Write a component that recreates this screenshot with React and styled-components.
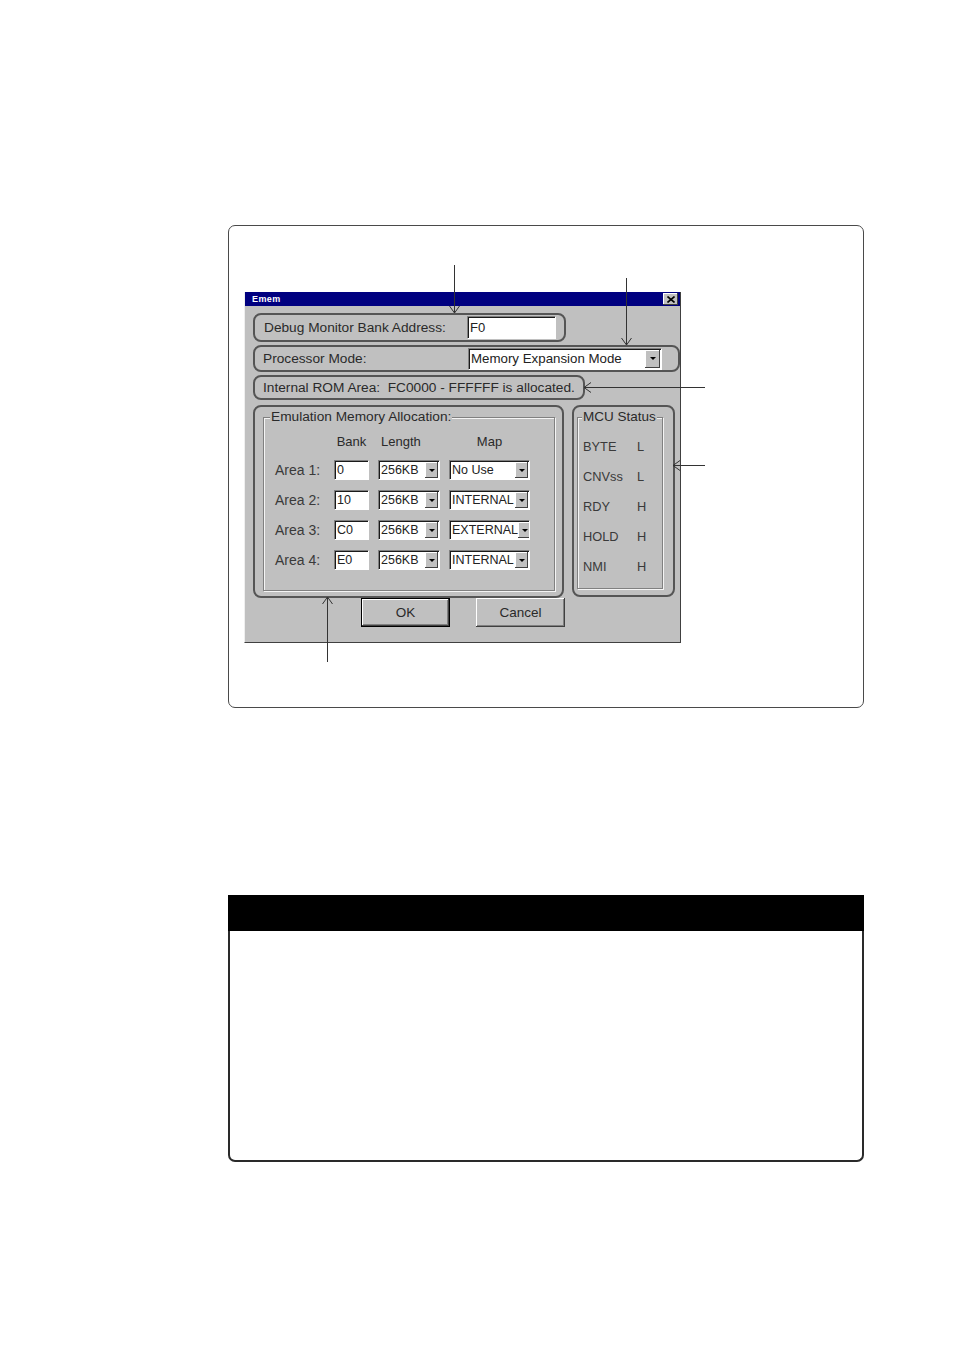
import React from "react";
import styled, { createGlobalStyle } from "styled-components";

const Global = createGlobalStyle`
  html, body { margin: 0; padding: 0; background: #fff; }
  body { font-family: "Liberation Sans", Arial, sans-serif; color: #222; }
`;

const Page = styled.div`
  padding: 225px 0 160px 228px;
  display: flex;
  flex-direction: column;
`;

const Figure = styled.div`
  position: relative;
  box-sizing: border-box;
  width: 636px;
  height: 483px;
  border: 1px solid #4a4a4a;
  border-radius: 7px;
  padding: 66px 0 0 15px;
`;

const Annotations = styled.svg`
  position: absolute;
  left: 0;
  top: 0;
  width: 100%;
  height: 100%;
  overflow: visible;
  pointer-events: none;
`;

const Dialog = styled.div`
  box-sizing: border-box;
  width: 437px;
  height: 351px;
  background: #c0c0c0;
  border-left: 1px solid #efefef;
  border-right: 1px solid #404040;
  border-bottom: 1px solid #404040;
  display: flex;
  flex-direction: column;
`;

const TitleBar = styled.div`
  height: 14px;
  background: #000080;
  display: flex;
  align-items: center;
  justify-content: space-between;
  padding: 0 2px 0 7px;
`;

const Title = styled.span`
  color: #fff;
  font-weight: bold;
  font-size: 9px;
  letter-spacing: 0.4px;
`;

const CloseBtn = styled.div`
  box-sizing: border-box;
  width: 15px;
  height: 12px;
  background: #c0c0c0;
  box-shadow: inset -1px -1px 0 #404040, inset 1px 1px 0 #fff;
  display: flex;
  align-items: center;
  justify-content: center;
`;

const Body = styled.div`
  padding: 7px 0 0 8px;
  display: flex;
  flex-direction: column;
`;

const Callout = styled.div`
  box-sizing: border-box;
  width: ${(p) => p.$w}px;
  height: ${(p) => p.$h}px;
  margin-top: ${(p) => p.$mt || 0}px;
  border: 2px solid #555;
  border-radius: 8px;
  display: flex;
  align-items: ${(p) => (p.$top ? "flex-start" : "center")};
  justify-content: space-between;
  padding: 0 ${(p) => p.$pr || 0}px 0 ${(p) => p.$pl || 0}px;
`;

const Label = styled.span`
  font-size: 13.7px;
  color: #2a2a2a;
  white-space: pre;
`;

const Sunken = styled.div`
  box-sizing: border-box;
  width: ${(p) => p.$w}px;
  height: ${(p) => p.$h}px;
  background: #fff;
  border-top: 1px solid #808080;
  border-left: 1px solid #808080;
  border-right: 1px solid #fff;
  border-bottom: 1px solid #fff;
  box-shadow: inset 1px 1px 0 #1a1a1a;
  display: flex;
  align-items: center;
  justify-content: space-between;
  padding: 0 1px 0 2px;
  font-size: ${(p) => p.$fs || 12.5}px;
  color: #222;
  white-space: nowrap;
  overflow: hidden;
`;

const ArrowBtn = styled.div`
  flex: none;
  box-sizing: border-box;
  width: ${(p) => p.$w || 13}px;
  height: ${(p) => p.$h || 16}px;
  background: #c0c0c0;
  box-shadow: inset -1px -1px 0 #404040, inset 1px 1px 0 #fff;
  display: flex;
  align-items: center;
  justify-content: center;
  &::after {
    content: "";
    border-left: 3px solid transparent;
    border-right: 3px solid transparent;
    border-top: 3px solid #000;
  }
`;

const MainRow = styled.div`
  margin-top: 5px;
  display: flex;
  gap: 8px;
  align-items: flex-start;
`;

const GroupBox = styled.div`
  position: relative;
  box-sizing: border-box;
  width: ${(p) => p.$w}px;
  height: ${(p) => p.$h}px;
  margin: 10px 0 0 ${(p) => p.$ml}px;
  border: 1px solid #808080;
  box-shadow: inset 1px 1px 0 #f4f4f4, 1px 1px 0 #f4f4f4;
  padding: ${(p) => p.$pad};
`;

const GroupLabel = styled.span`
  position: absolute;
  top: -9px;
  left: ${(p) => p.$left}px;
  background: #c0c0c0;
  padding: 0 1px;
  font-size: ${(p) => p.$fs || 13.7}px;
  line-height: 16px;
  color: #2a2a2a;
  white-space: nowrap;
`;

const AreaGrid = styled.div`
  display: grid;
  grid-template-columns: 50px 35px 62px 81px;
  grid-template-rows: 17px repeat(4, 20px);
  column-gap: 9px;
  row-gap: 10px;
  align-items: center;
`;

const Head = styled.span`
  font-size: 13px;
  color: #2a2a2a;
  text-align: ${(p) => p.$align || "center"};
  padding-left: ${(p) => p.$pl || 0}px;
`;

const RowLabel = styled.span`
  font-size: 14px;
  color: #3a3a3a;
  white-space: nowrap;
`;

const StatusGrid = styled.div`
  display: grid;
  grid-template-columns: 54px auto;
  grid-auto-rows: 30px;
  align-items: center;
  font-size: 12.8px;
  color: #3a3a3a;
`;

const ButtonRow = styled.div`
  display: flex;
  gap: 26px;
  padding-left: 108px;
`;

const Button = styled.div`
  box-sizing: border-box;
  width: 89px;
  height: 29px;
  background: #c0c0c0;
  display: flex;
  align-items: center;
  justify-content: center;
  font-size: 13.5px;
  color: #2a2a2a;
  border: ${(p) => (p.$default ? "1px solid #000" : "none")};
  box-shadow: inset -1px -1px 0 #404040, inset 1px 1px 0 #fff, inset -2px -2px 0 #808080;
`;

const Notice = styled.div`
  margin-top: 187px;
  box-sizing: border-box;
  width: 636px;
  height: 267px;
  display: flex;
  flex-direction: column;
`;

const NoticeHead = styled.div`
  height: 36px;
  background: #000;
`;

const NoticeBody = styled.div`
  flex: 1;
  border: 2px solid #2a2a2a;
  border-top: none;
  border-radius: 0 0 7px 7px;
`;

function Combo({ w, h, text, fs, bw, bh }) {
  return (
    <Sunken $w={w} $h={h} $fs={fs}>
      <span>{text}</span>
      <ArrowBtn $w={bw} $h={bh} />
    </Sunken>
  );
}

const areas = [
  ["Area 1:", "0", "No Use"],
  ["Area 2:", "10", "INTERNAL"],
  ["Area 3:", "C0", "EXTERNAL"],
  ["Area 4:", "E0", "INTERNAL"],
];

const status = [
  ["BYTE", "L"],
  ["CNVss", "L"],
  ["RDY", "H"],
  ["HOLD", "H"],
  ["NMI", "H"],
];

function Arrow({ x1, y1, x2, y2 }) {
  const dx = x2 - x1;
  const dy = y2 - y1;
  const len = Math.hypot(dx, dy);
  const ux = dx / len;
  const uy = dy / len;
  const a = 7;
  const s = 5;
  const bx = x2 - ux * a;
  const by = y2 - uy * a;
  const p1 = `${bx - uy * s},${by + ux * s}`;
  const p2 = `${bx + uy * s},${by - ux * s}`;
  return (
    <g stroke="#333" strokeWidth="1" fill="none">
      <line x1={x1} y1={y1} x2={x2} y2={y2} />
      <polyline points={`${p1} ${x2},${y2} ${p2}`} />
    </g>
  );
}

export default function App() {
  return (
    <>
      <Global />
      <Page>
        <Figure>
          <Dialog>
            <TitleBar>
              <Title>Emem</Title>
              <CloseBtn>
                <svg width="8" height="7" viewBox="0 0 8 7">
                  <path d="M0.5 0.5 L7.5 6.5 M7.5 0.5 L0.5 6.5" stroke="#000" strokeWidth="1.6" />
                </svg>
              </CloseBtn>
            </TitleBar>
            <Body>
              <Callout $w={313} $h={29} $pl={9} $pr={8}>
                <Label>Debug Monitor Bank Address:</Label>
                <Sunken $w={89} $h={23} $fs={13}>F0</Sunken>
              </Callout>
              <Callout $w={427} $h={27} $mt={3} $pl={8} $pr={16}>
                <Label>Processor Mode:</Label>
                <Combo w={194} h={22} fs={13.3} text="Memory Expansion Mode" bw={15} bh={18} />
              </Callout>
              <Callout $w={332} $h={25} $mt={3} $pl={8}>
                <Label>{"Internal ROM Area:  FC0000 - FFFFFF is allocated."}</Label>
              </Callout>
              <MainRow>
                <Callout $w={311} $h={193} $top>
                  <GroupBox $w={292} $h={174} $ml={8} $pad="15px 0 0 11px">
                    <GroupLabel $left={6}>Emulation Memory Allocation:</GroupLabel>
                    <AreaGrid>
                      <span />
                      <Head>Bank</Head>
                      <Head $align="left" $pl={3}>Length</Head>
                      <Head>Map</Head>
                      {areas.map(([label, bank, map]) => (
                        <React.Fragment key={label}>
                          <RowLabel>{label}</RowLabel>
                          <Sunken $w={35} $h={20}>{bank}</Sunken>
                          <Combo w={62} h={20} text="256KB" />
                          <Combo w={81} h={20} text={map} />
                        </React.Fragment>
                      ))}
                    </AreaGrid>
                  </GroupBox>
                </Callout>
                <Callout $w={103} $h={192} $top>
                  <GroupBox $w={86} $h={172} $ml={3} $pad="13px 0 0 5px">
                    <GroupLabel $left={4} $fs={13.5}>MCU Status</GroupLabel>
                    <StatusGrid>
                      {status.map(([k, v]) => (
                        <React.Fragment key={k}>
                          <span>{k}</span>
                          <span>{v}</span>
                        </React.Fragment>
                      ))}
                    </StatusGrid>
                  </GroupBox>
                </Callout>
              </MainRow>
              <ButtonRow>
                <Button $default>OK</Button>
                <Button>Cancel</Button>
              </ButtonRow>
            </Body>
          </Dialog>
          <Annotations>
            <Arrow x1={225.5} y1={39} x2={225.5} y2={87} />
            <Arrow x1={397.5} y1={52} x2={397.5} y2={119} />
            <Arrow x1={476} y1={161.5} x2={355} y2={161.5} />
            <Arrow x1={476} y1={239.5} x2={444} y2={239.5} />
            <Arrow x1={98.5} y1={436} x2={98.5} y2={371} />
          </Annotations>
        </Figure>
        <Notice>
          <NoticeHead />
          <NoticeBody />
        </Notice>
      </Page>
    </>
  );
}
